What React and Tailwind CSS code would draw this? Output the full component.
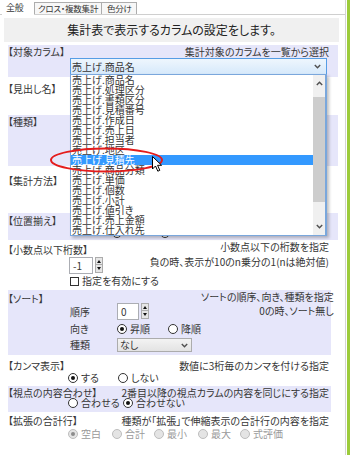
import React from 'react';

const listItems = ['商品名', '処理区分', '書類区分', '見積番号', '作成日', '売上日', '担当者', '地区', '見積先', '商品分類', '単価', '個数', '小計', '値引き', '売上金額', '仕入れ先'];

const Chevron = ({ up }) => (
  <svg width="7" height="5" viewBox="0 0 7 5">
    <path d={up ? 'M0.8 4 L3.5 1.2 L6.2 4' : 'M0.8 1 L3.5 3.8 L6.2 1'} fill="none" stroke="#505050" strokeWidth="1.4" />
  </svg>
);

const Radio = ({ checked, disabled }) => (
  <span className={`w-[10px] h-[10px] rounded-full border flex items-center justify-center shrink-0 ${disabled ? 'border-[#bdbdbd] bg-[#e4e4e4]' : 'border-[#333] bg-white'}`}>
    {checked && <span className={`w-[4px] h-[4px] rounded-full ${disabled ? 'bg-[#8c8c8c]' : 'bg-[#111]'}`} />}
  </span>
);

const Opt = ({ label, checked, disabled, w }) => (
  <div className={`flex items-center gap-[3px] whitespace-nowrap shrink-0 ${w}`}>
    <Radio checked={checked} disabled={disabled} />
    <span className={disabled ? 'text-[#9a9a9a]' : ''}>{label}</span>
  </div>
);

const Spinner = ({ value, w }) => (
  <div className="flex items-start gap-[2px]">
    <div className={`h-[17px] border border-[#abadb3] bg-white pl-[3px] leading-[15px] ${w}`}>{value}</div>
    <div className="flex flex-col w-[8px]">
      <div className="h-[8px] border border-[#acacac] bg-[#e6e6e6] flex items-center justify-center">
        <svg width="4" height="3" viewBox="0 0 4 3"><path d="M0 3 L2 0 L4 3 Z" fill="#111" /></svg>
      </div>
      <div className="h-[8px] border border-[#acacac] border-t-0 bg-[#e6e6e6] flex items-center justify-center">
        <svg width="4" height="3" viewBox="0 0 4 3"><path d="M0 0 L2 3 L4 0 Z" fill="#111" /></svg>
      </div>
    </div>
  </div>
);

export default function App() {
  return (
    <div className="w-[350px] h-[455px] bg-white relative overflow-hidden flex font-['Noto_Sans_CJK_JP',sans-serif] [font-feature-settings:'palt'] text-[10px] leading-[14px] text-[#363636] whitespace-nowrap">
      <div className="w-[346px] flex flex-col border-r border-[#d4d4d4]">
        {/* tabs */}
        <div className="h-[15px] flex items-end border-b border-[#cfcfcf] text-[8.5px] leading-[11px] tracking-[-0.2px]">
          <div className="ml-[2px] w-[32px] h-[15px] -mb-[1px] bg-white pl-[4px] pt-[2px] text-[9px]">全般</div>
          <div className="w-[68px] h-[12px] border-l border-t border-r border-[#adadad] bg-[#f7f7f7] pl-[3px] overflow-hidden">クロス・複数集計</div>
          <div className="w-[35px] h-[12px] border-t border-r border-[#adadad] bg-[#f7f7f7] pl-[5px] overflow-hidden">色分け</div>
        </div>

        <div className="mt-[3px] ml-[4px] w-[335px] h-[24px] bg-[#f0f0f0] text-[12px] leading-[24px] text-center text-[#222]">
          集計表で表示するカラムの設定をします。
        </div>

        {/* 対象カラム */}
        <div className="mt-[3px] ml-[8px] w-[330px] h-[32px] bg-[#e6e6fa]">
          <div className="h-[13px] flex justify-between pr-[9px]">
            <span>【対象カラム】</span>
            <span>集計対象のカラムを一覧から選択</span>
          </div>
          <div className="ml-[62px] w-[257px] h-[17px] border border-[#569de5] bg-gradient-to-b from-[#eef6fd] to-[#d6e9fb] flex items-center justify-between pl-[1px] pr-[5px]">
            <span>売上げ.商品名</span>
            <Chevron />
          </div>
        </div>

        {/* 見出し名 */}
        <div className="ml-[8px] w-[330px] h-[38px] pt-[5px]">
          <span>【見出し名】</span>
        </div>

        {/* 種類 */}
        <div className="ml-[8px] w-[330px] h-[51px] bg-[#e6e6fa]">
          <span>【種類】</span>
        </div>

        {/* 集計方法 */}
        <div className="ml-[8px] w-[330px] h-[47px] pt-[8px]">
          <span>【集計方法】</span>
        </div>

        {/* 位置揃え */}
        <div className="ml-[8px] w-[330px] h-[27px] bg-[#e6e6fa] pt-[1px]">
          <div className="h-[14px]">【位置揃え】</div>
          <div className="h-[10px] flex items-center pl-[104px] gap-[38px]">
            <Radio />
            <Radio />
          </div>
        </div>

        {/* 小数点以下桁数 */}
        <div className="ml-[8px] w-[323px] h-[50px] pr-[2px]">
          <div className="h-[15px] flex justify-between items-start">
            <span className="mt-[3px]">【小数点以下桁数】</span>
            <span>小数点以下の桁数を指定</span>
          </div>
          <div className="h-[18px] flex justify-between items-start">
            <div className="ml-[61px] mt-[2px]">
              <Spinner value="-1" w="w-[24px]" />
            </div>
            <span>負の時、表示が10のn乗分の1(nは絶対値)</span>
          </div>
          <div className="mt-[1px] h-[14px] ml-[62px] flex items-center gap-[3px]">
            <span className="w-[9px] h-[9px] border border-[#333] bg-white" />
            <span>指定を有効にする</span>
          </div>
        </div>

        {/* ソート */}
        <div className="ml-[8px] w-[323px] h-[65px] bg-[#e6e6fa] flex justify-between pr-[1px]">
          <div className="flex flex-col shrink-0">
            <div className="mt-[2px] h-[11px]">【ソート】</div>
            <div className="h-[17px] ml-[62px] flex items-center">
              <span className="w-[47px]">順序</span>
              <Spinner value="0" w="w-[22px]" />
            </div>
            <div className="mt-[2px] h-[13px] ml-[62px] flex items-center">
              <span className="w-[47px]">向き</span>
              <Opt label="昇順" checked w="w-[51px]" />
              <Opt label="降順" />
            </div>
            <div className="mt-[3px] h-[14px] ml-[62px] flex items-center">
              <span className="w-[47px]">種類</span>
              <div className="w-[75px] h-[14px] border border-[#acacac] bg-gradient-to-b from-[#f3f3f3] to-[#e3e3e3] flex items-center justify-between pl-[2px] pr-[3px] leading-[12px]">
                <span>なし</span>
                <Chevron />
              </div>
            </div>
          </div>
          <div className="text-right">
            <div>ソートの順序、向き、種類を指定</div>
            <div>0の時、ソート無し</div>
          </div>
        </div>

        {/* カンマ表示 */}
        <div className="ml-[8px] w-[323px] h-[31px] pt-[4px] pr-[2px]">
          <div className="h-[12px] flex justify-between">
            <span>【カンマ表示】</span>
            <span>数値に3桁毎のカンマを付ける指定</span>
          </div>
          <div className="h-[13px] ml-[60px] flex items-center">
            <Opt label="する" checked w="w-[50px]" />
            <Opt label="しない" />
          </div>
        </div>

        {/* 視点の内容合わせ */}
        <div className="ml-[8px] w-[323px] h-[26px] bg-[#e6e6fa] pt-[1px] pr-[2px] leading-[11px]">
          <div className="h-[11px] flex justify-between">
            <span>【視点の内容合わせ】</span>
            <span>2番目以降の視点カラムの内容を同じにする指定</span>
          </div>
          <div className="h-[10px] ml-[60px] flex items-center leading-[10px]">
            <Opt label="合わせる" w="w-[55px]" />
            <Opt label="合わせない" checked />
          </div>
        </div>

        {/* 拡張の合計行 */}
        <div className="ml-[8px] w-[323px] h-[28px] pt-[2px] pr-[2px]">
          <div className="h-[13px] flex justify-between">
            <span>【拡張の合計行】</span>
            <span>種類が「拡張」で伸縮表示の合計行の内容を指定</span>
          </div>
          <div className="h-[14px] ml-[60px] flex items-center">
            <Opt label="空白" checked disabled w="w-[44px]" />
            <Opt label="合計" disabled w="w-[42px]" />
            <Opt label="最小" disabled w="w-[44px]" />
            <Opt label="最大" disabled w="w-[42px]" />
            <Opt label="式評価" disabled />
          </div>
        </div>
      </div>
      <div className="w-[1px]" />
      <div className="w-[3px] bg-[#9ccb3b]" />

      {/* open dropdown list */}
      <div className="absolute left-[70px] top-[74px] w-[257px] h-[162px] bg-white border-l border-t border-b border-r-2 border-[#7aa7dc] shadow-[2px_2px_3px_rgba(0,0,0,0.25)] flex leading-[10px]">
        <div className="w-[242px] flex flex-col">
          {listItems.map((it, i) => (
            <div key={it} className={`h-[10px] pl-[1px] ${i === 8 ? 'bg-[#3399ff] text-white' : ''}`}>
              売上げ.{it}
            </div>
          ))}
        </div>
        <div className="w-[12px] bg-[#f0f0f0] flex flex-col">
          <div className="h-[17px] flex items-center justify-center"><Chevron up /></div>
          <div className="mt-[5px] h-[105px] bg-[#cdcdcd]" />
          <div className="flex-1" />
          <div className="h-[17px] flex items-center justify-center"><Chevron /></div>
        </div>
      </div>

      {/* red annotation ellipse */}
      <svg className="absolute left-[49px] top-[146px]" width="116" height="28" viewBox="0 0 116 28">
        <ellipse cx="57.5" cy="14" rx="55.5" ry="11.5" fill="none" stroke="#e41c1c" strokeWidth="2" />
      </svg>

      {/* mouse cursor */}
      <svg className="absolute left-[152px] top-[156px]" width="11" height="17" viewBox="0 0 11 17">
        <path d="M0.5 0.5 L0.5 13 L3.5 10 L5.8 15.2 L7.8 14.3 L5.6 9.3 L9.6 9.3 Z" fill="#fff" stroke="#000" strokeWidth="1" />
      </svg>
    </div>
  );
}
